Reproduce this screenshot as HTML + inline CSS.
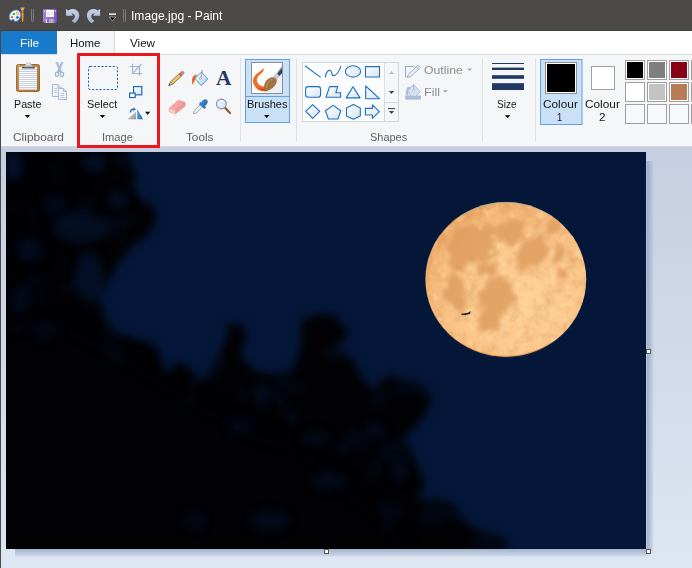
<!DOCTYPE html>
<html lang="en">
<head>
<meta charset="utf-8">
<title>Image.jpg - Paint</title>
<style>
html,body{margin:0;padding:0;}
body{width:692px;height:568px;overflow:hidden;position:relative;background:#d3dbe8;font-family:"Liberation Sans",sans-serif;font-size:12px;color:#1e1e1e;}
.abs{position:absolute;}
#titlebar{left:0;top:0;width:692px;height:30px;background:#4b4a48;border-bottom:1px solid #403f3d;}
#title{left:132px;top:9px;color:#fff;font-size:12px;line-height:14px;white-space:nowrap;}
#leftborder{left:0;top:0;width:1px;height:568px;background:#4b4a48;}
#tabrow{left:1px;top:31px;width:691px;height:23px;background:#fff;border-bottom:1px solid #dadbdc;}
#filetab{left:1px;top:31px;width:56px;height:23px;background:#1979ca;color:#fff;}
#hometab{left:58px;top:31px;width:56px;height:24px;background:#f5f6f7;border-right:1px solid #dadbdc;}
.tabtxt{position:absolute;top:5px;line-height:14px;white-space:nowrap;}
#ribbon{left:1px;top:55px;width:691px;height:91px;background:#f5f6f7;}
#workspace{left:1px;top:146px;width:691px;height:422px;background:linear-gradient(#d6d8dc 0,#d6d8dc 1px,#c5cfe1 1px,#dde6f2 100%);}
.lbl,.grp{transform-origin:0 0;font-size:11px;}
.lbl{position:absolute;white-space:nowrap;line-height:14px;color:#151515;}
.grp{position:absolute;white-space:nowrap;line-height:14px;color:#5f5f5f;}
.sep{position:absolute;top:58px;width:1px;height:84px;background:#e1e2e4;}
#redbox{left:77px;top:53px;width:77px;height:89px;border:3px solid #ec161d;}
#canvas{left:6px;top:152px;width:640px;height:396.6px;background:#051738;overflow:hidden;}
.handle{position:absolute;width:3px;height:3px;background:#fff;border:1px solid #555;}
</style>
</head>
<body>
<div id="workspace" class="abs"></div>
<div id="titlebar" class="abs"></div>
<div id="tabrow" class="abs"></div>
<div id="filetab" class="abs"></div>
<div id="hometab" class="abs"></div>
<div id="ribbon" class="abs"></div>

<div class="sep" style="left:240px"></div>
<div class="sep" style="left:296px"></div>
<div class="sep" style="left:482px"></div>
<div class="sep" style="left:535px"></div>
<svg id="ui" width="692" height="150" viewBox="0 0 692 150" style="position:absolute;left:0;top:0;overflow:visible">
<defs>
<linearGradient id="gUndo" x1="0" y1="0" x2="0" y2="1"><stop offset="0" stop-color="#c3d1e6"/><stop offset="1" stop-color="#9fb3d2"/></linearGradient>
<linearGradient id="gPurple" x1="0" y1="0" x2="1" y2="0"><stop offset="0" stop-color="#a67ddc"/><stop offset="0.8" stop-color="#9364cf"/><stop offset="1" stop-color="#6d45b3"/></linearGradient>
<linearGradient id="gPal" x1="0" y1="0" x2="1" y2="1"><stop offset="0" stop-color="#ffffff"/><stop offset="1" stop-color="#d4e6f8"/></linearGradient>
</defs>
<!-- app icon: palette + brush -->
<g id="appicon">
<path d="M9.3,17.2 C9.0,12.8 13.2,9.8 16.6,10.0 C19.6,10.2 21.0,12.6 20.6,15.6 C20.2,18.8 18.2,21.4 15.6,21.6 C14.0,21.7 14.4,19.6 13.4,19.3 C12.4,19.0 12.2,20.6 10.9,20.3 C9.9,20.0 9.4,18.6 9.3,17.2 Z" fill="url(#gPal)" stroke="#3f8fdc" stroke-width="0.9"/>
<rect x="12.6" y="13.1" width="2.4" height="1.8" rx="0.6" fill="#3fae2a"/>
<circle cx="17.4" cy="13.3" r="1.1" fill="#fff" stroke="#f7941d" stroke-width="1"/>
<rect x="11.1" y="16.1" width="1.8" height="1.9" fill="#e8501e"/>
<circle cx="17.4" cy="17.4" r="1.0" fill="#4b4a48" stroke="#2f7fd0" stroke-width="0.9"/>
<path d="M20.2,7.6 L24.8,7.6 L23.4,10.4 L21.6,10.4 Z" fill="#e8a864"/>
<path d="M21.6,10.2 L23.4,10.2 L23.2,12.6 L21.8,12.6 Z" fill="#9a9a9a"/>
<path d="M21.5,12.6 L23.7,12.6 L23.4,21.0 L22.6,22.2 L21.8,21.0 Z" fill="#f7870f"/>
<path d="M22.3,13 L22.9,13 L22.8,20 L22.4,20 Z" fill="#ffc46a" opacity="0.8"/>
</g>
<!-- separators -->
<path d="M31.5,9 V20.5 Q31.5,21.5 32.5,21.5 Q33.5,21.5 33.5,20.5 V9" fill="none" stroke="#848280" stroke-width="0.9"/>
<path d="M123.5,9 V20.5 Q123.5,21.5 124.5,21.5 Q125.5,21.5 125.5,20.5 V9" fill="none" stroke="#848280" stroke-width="0.9"/>
<!-- save -->
<g id="save">
<path d="M43,10 Q43,9 44,9 H56 Q57,9 57,10 V22 Q57,23 56,23 H44.5 L43,21.5 Z" fill="url(#gPurple)"/>
<rect x="46" y="10" width="8" height="7" fill="#ffffff"/>
<rect x="46" y="12" width="8" height="0.8" fill="#d9d9e2"/>
<rect x="46" y="14.2" width="8" height="0.8" fill="#d9d9e2"/>
<rect x="44" y="10.6" width="1" height="1.4" fill="#e6d8f8"/>
<rect x="55" y="10.6" width="1" height="1.4" fill="#e6d8f8"/>
<rect x="46" y="19" width="7.6" height="4" fill="#b4b4b4"/>
<rect x="47" y="19" width="2" height="3.2" fill="#8a5fc8"/>
<rect x="46" y="19" width="1" height="4" fill="#e8e8e8"/>
</g>
<!-- undo -->
<path id="undoP" d="M66,9 L66,15.7 L73.2,15.7 L71.4,13.5 C73,13 74.6,14.2 74.8,16 C75,18 73.6,19.6 71.7,20.8 L74.4,23.2 C77.4,21.4 79.2,18.6 79.2,15.2 C79.2,11.6 76,8.8 72,9 C70.6,9.1 69.4,9.6 68.4,10.5 Z" fill="url(#gUndo)"/>
<path d="M66,9 L66,15.7 L73.2,15.7 L71.4,13.5 C73,13 74.6,14.2 74.8,16 C75,18 73.6,19.6 71.7,20.8 L74.4,23.2 C77.4,21.4 79.2,18.6 79.2,15.2 C79.2,11.6 76,8.8 72,9 C70.6,9.1 69.4,9.6 68.4,10.5 Z" fill="url(#gUndo)" transform="translate(166.1,0) scale(-1,1)"/>
<!-- qat dropdown -->
<rect x="109" y="13.4" width="7" height="1.5" fill="#f2f2f2"/>
<path d="M109.2,17 H115.8 L112.5,21 Z" fill="#0a0a0a" stroke="#cfcfcf" stroke-width="0.6"/>

<!-- ===== ribbon icons ===== -->
<defs>
<linearGradient id="gBoard" x1="0" y1="0" x2="1" y2="1"><stop offset="0" stop-color="#c99a5b"/><stop offset="1" stop-color="#a97334"/></linearGradient>
<linearGradient id="gClip" x1="0" y1="0" x2="0" y2="1"><stop offset="0" stop-color="#f4f4f4"/><stop offset="1" stop-color="#9a9a9a"/></linearGradient>
<linearGradient id="gShape" x1="0" y1="0" x2="1" y2="1"><stop offset="0" stop-color="#ffffff"/><stop offset="1" stop-color="#d6e5f5"/></linearGradient>
<linearGradient id="gGrayTri" x1="0" y1="0" x2="1" y2="1"><stop offset="0" stop-color="#f2f2f2"/><stop offset="1" stop-color="#8c8c8c"/></linearGradient>
<linearGradient id="gBlueTri" x1="0" y1="0" x2="1" y2="0"><stop offset="0" stop-color="#5aa0e0"/><stop offset="1" stop-color="#1560ad"/></linearGradient>
<pattern id="paperlines" x="19" y="69" width="18" height="2" patternUnits="userSpaceOnUse"><rect x="0" y="0" width="18" height="1" fill="#c3cee3"/></pattern>
</defs>
<!-- paste -->
<g id="paste">
<rect x="16.5" y="64.5" width="23" height="27" rx="1.8" fill="url(#gBoard)" stroke="#9a6a2e" stroke-width="1"/>
<rect x="19" y="67" width="18" height="22.5" fill="#ffffff"/>
<rect x="19" y="69" width="18" height="19" fill="url(#paperlines)"/>
<rect x="19" y="88.6" width="18" height="0.9" fill="#d9dbe0"/>
<path d="M22,68 L25.4,64.6 Q28.4,61 31.4,64.6 L34.8,68 Z" fill="url(#gClip)" stroke="#8a8a8a" stroke-width="0.6"/>
<circle cx="28.4" cy="64.2" r="0.9" fill="#f5f6f7"/>
<rect x="21.8" y="67.2" width="13.2" height="1.1" fill="#4d4d4d"/>
</g>
<path d="M24.8,115 H30.2 L27.5,118 Z" fill="#000"/>
<!-- cut -->
<g id="cut" fill="none" stroke="#9db1cf" stroke-linecap="round">
<path d="M56.2,62.4 L57.6,62.4 L61.6,71.6 L60.4,72.4 Z" fill="#a9bbd6" stroke-width="0.6"/>
<path d="M62.8,62.4 L61.4,62.4 L57.4,71.6 L58.6,72.4 Z" fill="#a9bbd6" stroke-width="0.6"/>
<ellipse cx="57" cy="74.3" rx="1.6" ry="2.2" stroke-width="1.2"/>
<ellipse cx="62" cy="74.3" rx="1.6" ry="2.2" stroke-width="1.2"/>
</g>
<!-- copy -->
<g id="copy" stroke="#a6b8d6" stroke-width="1" fill="#f3f6fb">
<path d="M52.5,84.5 H58 L61.5,88 V96.5 H52.5 Z"/>
<path d="M58,84.5 V88 H61.5" fill="none"/>
<path d="M58.5,88.5 H63.5 L66.5,91.5 V99.5 H58.5 Z" fill="#f8fafd"/>
<path d="M63.5,88.5 V91.5 H66.5" fill="none"/>
<path d="M54.5,88.5 H57 M54.5,90.5 H57 M54.5,92.5 H57 M60.5,93.5 H64.5 M60.5,95.5 H64.5 M60.5,97.5 H64.5" stroke="#b4c3dc" fill="none"/>
</g>
<!-- select -->
<rect x="88.5" y="66.5" width="29" height="23" rx="1.5" fill="none" stroke="#1763ad" stroke-width="1" stroke-dasharray="2.1 1.7"/>
<path d="M99.8,115 H105.2 L102.5,118 Z" fill="#000"/>
<!-- crop -->
<g id="crop" fill="none" stroke="#9db1cf" stroke-width="1.1">
<path d="M129.5,66.5 H139.5 V75.8"/>
<path d="M132.5,63.5 V73.5 H141.8"/>
<path d="M133.5,72.5 L141.5,64"/>
</g>
<!-- resize -->
<g id="resize">
<rect x="133.6" y="86.6" width="8.2" height="8.2" fill="url(#gShape)" stroke="#1a6ab8" stroke-width="1.2"/>
<rect x="129.6" y="93.1" width="5.6" height="4.4" fill="#ffffff" stroke="#1a6ab8" stroke-width="1.2"/>
</g>
<!-- rotate -->
<g id="rotate">
<path d="M127.4,119.3 L136,119.3 L136,111.6 Z" fill="url(#gGrayTri)"/>
<path d="M137.2,119.3 L143,119.3 L137.2,109 Z" fill="url(#gBlueTri)"/>
<path d="M130.4,112.6 C130.4,110.4 131.8,109.3 133.8,109.2" fill="none" stroke="#1a6ab8" stroke-width="1.3"/>
<path d="M133.4,107.6 L136,109.3 L133.4,111 Z" fill="#1a6ab8"/>
<path d="M145,111.8 H150.2 L147.6,114.8 Z" fill="#000"/>
</g>

<!-- ===== tools ===== -->
<defs>
<linearGradient id="gPencil" x1="0" y1="0" x2="1" y2="1"><stop offset="0" stop-color="#ffe08a"/><stop offset="1" stop-color="#e9a820"/></linearGradient>
<linearGradient id="gBucket" x1="0" y1="0" x2="1" y2="1"><stop offset="0" stop-color="#ffffff"/><stop offset="0.5" stop-color="#dcebf9"/><stop offset="1" stop-color="#8fbce8"/></linearGradient>
<linearGradient id="gEraser" x1="0" y1="0" x2="1" y2="1"><stop offset="0" stop-color="#f9b4b0"/><stop offset="1" stop-color="#ee8f8c"/></linearGradient>
<linearGradient id="gDrop" x1="0" y1="0" x2="1" y2="1"><stop offset="0" stop-color="#4d95d8"/><stop offset="1" stop-color="#1c5fa8"/></linearGradient>
<radialGradient id="gLens" cx="0.4" cy="0.35" r="0.7"><stop offset="0" stop-color="#ffffff"/><stop offset="1" stop-color="#c4dcf4"/></radialGradient>
</defs>
<!-- pencil -->
<g id="pencil">
<path d="M168.8,85.6 L170.6,81.7 L179,73.9 L181.2,76.3 L172.8,84.1 Z" fill="url(#gPencil)" stroke="#5f5138" stroke-width="0.7" stroke-linejoin="round"/>
<path d="M168.8,85.6 L170.6,81.7 L172.8,84.1 Z" fill="#ecd0a8" stroke="#5f5138" stroke-width="0.5"/>
<path d="M168.8,85.6 L169.5,84 L170.5,85 Z" fill="#2a2a2a"/>
<path d="M179,73.9 L180.1,72.8 L182.3,75.2 L181.2,76.3 Z" fill="#8e8e8e" stroke="#5f5138" stroke-width="0.4"/>
<path d="M180.1,72.8 L181.4,71.6 Q182.9,70.6 183.9,71.9 Q184.8,73 183.6,74.1 L182.3,75.2 Z" fill="#e07a7e" stroke="#a85a5c" stroke-width="0.4"/>
</g>
<!-- fill bucket -->
<g id="bucket">
<path d="M196.4,74.6 C193.6,75 192,77.6 192,80.2 C192,82.4 192.4,84 193,85 C193.6,82.2 194.6,79.8 197,77.4 Z" fill="#f0601a"/>
<path d="M201.4,72.2 L207.9,78.9 L201.3,85.7 L194.9,78.2 Z" fill="url(#gBucket)" stroke="#5b9bd5" stroke-width="1" stroke-linejoin="round"/>
<path d="M202,70 C202.8,72 201.4,75 200.6,78" fill="none" stroke="#8a8f98" stroke-width="0.9"/>
<circle cx="200.5" cy="78.4" r="1.1" fill="#fff" stroke="#8a8f98" stroke-width="0.7"/>
</g>
<!-- text A -->
<text x="216" y="84.9" font-family="'Liberation Serif',serif" font-weight="bold" font-size="20" fill="#1f3864" textLength="15.4" lengthAdjust="spacingAndGlyphs">A</text>
<!-- eraser -->
<g id="eraser">
<path d="M169.2,108.4 L178.4,100.2 L185.2,102.6 L185,106.2 L175.4,113.8 L169.2,111.6 Z" fill="url(#gEraser)" stroke="#e07f7c" stroke-width="0.6" stroke-linejoin="round"/>
<path d="M169.2,108.4 L175.6,110.6 L185.2,102.6 M175.6,110.6 L175.4,113.8" fill="none" stroke="#e88d8a" stroke-width="0.7"/>
<path d="M169.2,108.4 L175.6,110.6 L175.4,113.8 L169.2,111.6 Z" fill="#fbc9bd"/>
</g>
<!-- colour picker -->
<g id="picker">
<path d="M193.4,113.6 L194.2,111 L201,103.6 L203.4,105.8 L196.4,113 Z" fill="#f2f5fa" stroke="#8c94a4" stroke-width="0.8"/>
<path d="M199,104.4 L204.6,109 L206,107.4 L204.8,106.2 C207.4,104.4 208.6,101.6 207.2,100 C205.6,98.4 202.6,99.4 201.2,102.4 L200.2,101.6 Z" fill="url(#gDrop)"/>
</g>
<!-- magnifier -->
<g id="magnifier">
<path d="M225,107.8 L230,113" stroke="#8a5a2e" stroke-width="2.2" stroke-linecap="round"/>
<circle cx="221.4" cy="104" r="4.9" fill="url(#gLens)" stroke="#8c9099" stroke-width="1.1"/>
<path d="M219,103 H223.4" stroke="#b5d2ee" stroke-width="0.8"/>
</g>
<!-- brushes button -->
<g id="brushes">
<rect x="245.5" y="59.5" width="44" height="63" fill="#c9e0f7" stroke="#62a2e4" stroke-width="1"/>
<path d="M245.5,96.5 H289.5" stroke="#62a2e4" stroke-width="1"/>
<rect x="251.5" y="62.5" width="31" height="31" fill="#ffffff" stroke="#8e8e8e" stroke-width="1"/>
<clipPath id="brclip"><rect x="252" y="63" width="30" height="30"/></clipPath>
<g clip-path="url(#brclip)">
<path d="M282,70 L282,93 L262,93 Z" fill="#e9edf2" opacity="0.8"/>
<path d="M263.4,68 C262.4,70.4 259.6,71.4 257,73.6 C253.4,76.6 251.6,80.6 254.2,85.2 C256.6,89.6 262.4,91.8 267.4,90.6 L270.6,84.6 C266,87.6 259.6,87 257.4,82.4 C255.8,78.8 257.8,76 260.4,74.2 C262.6,72.6 264.4,70.8 263.4,68 Z" fill="#f26a21"/>
<path d="M256.6,88 C260,91.6 264.8,92 268,90.4 L269.6,86.2 C266,88.4 260.4,88.8 256.6,88 Z" fill="#d9531a"/>
<path d="M272.4,78.4 L283,65 L283,72 L275,80.8 Z" fill="#c9ccd2" stroke="#8f949c" stroke-width="0.5"/>
<path d="M277.4,73.6 L283,66.6 L283,72 L279.2,76 Z" fill="#2c3f6a"/>
<path d="M264.4,88.6 C263.2,84.4 266.2,79.2 270.8,77.6 C273.6,76.6 276.6,78.4 276.8,80.8 C277,84.2 272.6,89.6 267.4,90.6 C265.8,90.8 264.8,90 264.4,88.6 Z" fill="#a3733f"/>
<path d="M266.6,87.4 C266.4,84.2 268.6,80.6 271.8,79.4" fill="none" stroke="#c49a66" stroke-width="1"/>
</g>
<path d="M264.1,115 H269.3 L266.7,118 Z" fill="#000"/>
</g>

<!-- ===== shapes gallery ===== -->
<g id="shapes">
<rect x="302.5" y="62.5" width="96" height="59" fill="#fbfcfd" stroke="#d3d6db" stroke-width="1"/>
<rect x="385" y="63" width="13" height="58" fill="#f5f6f7"/>
<path d="M384.5,62.5 V121.5" stroke="#dcdfe3" stroke-width="1"/>
<rect x="384.5" y="102.5" width="14" height="19" fill="#f5f6f7" stroke="#d3d6db" stroke-width="1"/>
<g fill="url(#gShape)" stroke="#1f6fc0" stroke-width="1.1" stroke-linejoin="round">
<path d="M305,65.7 L320.7,77.4" fill="none"/>
<path d="M325.3,77.4 C326,72 328.4,69.6 330.4,70.6 C332.6,71.8 331,75.8 333.6,75.6 C336.6,75.4 339.6,70 341,66.1" fill="none"/>
<ellipse cx="353" cy="71.4" rx="7.6" ry="5.7"/>
<rect x="365.5" y="66.6" width="14" height="10.4"/>
<rect x="305.6" y="86.6" width="15" height="10.6" rx="2.6"/>
<path d="M329.6,86.6 H337.8 L335.8,92.7 H340.6 V97.3 H326 Z"/>
<path d="M353,86.8 L360,97.9 H346.2 Z"/>
<path d="M365.7,86 V98.7 H379.4 Z"/>
<path d="M312.7,104.6 L319.7,111.4 L312.7,118.3 L305.7,111.4 Z"/>
<path d="M333.1,105.4 L340.8,110.8 L337.9,119 H328.4 L325.5,110.8 Z"/>
<path d="M353.4,104.6 L360.3,107.9 V116 L353.4,119.3 L346.5,116 V107.9 Z"/>
<path d="M365.4,108.4 H372.4 V104.9 L379.4,111.6 L372.4,118.4 V115 H365.4 Z"/>
</g>
<path d="M389,74 L391.5,71 L394,74 Z" fill="#b9bdc9"/>
<path d="M388.8,91 H394.2 L391.5,94 Z" fill="#3f4560"/>
<path d="M388,108.6 H395" stroke="#3f4560" stroke-width="1.1"/>
<path d="M388.8,111 H394.2 L391.5,114 Z" fill="#3f4560"/>
</g>
<!-- outline / fill -->
<g id="outlinefill">
<path d="M405.5,77.5 V66.5 H414.5" fill="none" stroke="#9cb0cf" stroke-width="1.1"/>
<path d="M407.3,77.6 L408.5,74.2 L417.9,65.2 L420.3,67.6 L410.8,76.5 Z" fill="#e9eef6" stroke="#9cb0cf" stroke-width="1" stroke-linejoin="round"/>
<path d="M416.3,66.8 L418.7,69.2" stroke="#9cb0cf" stroke-width="0.9"/>
<path d="M467.2,68.4 H472 L469.6,71 Z" fill="#a6a6a6"/>
<rect x="405.2" y="95.5" width="15.8" height="4.1" fill="#a9bbd6"/>
<path d="M408.8,86.4 C406.4,87.4 405.6,90.4 406.2,95 L408.4,95.2 C408.2,91.6 408.6,89.4 410.2,87.8 Z" fill="#a9bbd6"/>
<path d="M413.5,84.8 L420.3,91.6 L415.6,96.4 H411.6 L407.4,90.8 Z" fill="#d5e0ef" stroke="#a9bbd6" stroke-width="1" stroke-linejoin="round"/>
<path d="M413.7,84 V90.6" stroke="#a0b2cf" stroke-width="0.9"/>
<circle cx="413.5" cy="90.9" r="1" fill="#fff" stroke="#a0b2cf" stroke-width="0.6"/>
<path d="M443,90.2 H447.8 L445.4,92.8 Z" fill="#a6a6a6"/>
</g>
<!-- size -->
<g id="size" fill="#1f3864">
<rect x="492" y="63" width="32" height="1"/>
<rect x="492" y="67.6" width="32" height="2.4"/>
<rect x="492" y="75.2" width="32" height="3.6"/>
<rect x="492" y="83.2" width="32" height="6.8"/>
<path d="M505,115.3 H510.2 L507.6,118.2 Z" fill="#000"/>
</g>
<!-- colours -->
<g id="colours">
<rect x="540.5" y="59.5" width="41.5" height="65" fill="#c9e0f7" stroke="#62a2e4" stroke-width="1"/>
<rect x="545.5" y="62.5" width="31" height="31" fill="#ffffff" stroke="#8e8e8e" stroke-width="1"/>
<rect x="547" y="64" width="28" height="28" fill="#000000"/>
<rect x="591.5" y="66.5" width="23" height="23" fill="#ffffff" stroke="#a0a0a0" stroke-width="1"/>
<g stroke="#a0a0a0" stroke-width="1" fill="#ffffff">
<rect x="625.5" y="60.5" width="19" height="19"/><rect x="647.5" y="60.5" width="19" height="19"/><rect x="669.5" y="60.5" width="19" height="19"/><rect x="691.5" y="60.5" width="19" height="19"/>
<rect x="625.5" y="82.5" width="19" height="19"/><rect x="647.5" y="82.5" width="19" height="19"/><rect x="669.5" y="82.5" width="19" height="19"/><rect x="691.5" y="82.5" width="19" height="19"/>
<rect x="625.5" y="104.5" width="19" height="19" fill="#f7f8f9"/><rect x="647.5" y="104.5" width="19" height="19" fill="#f7f8f9"/><rect x="669.5" y="104.5" width="19" height="19" fill="#f7f8f9"/><rect x="691.5" y="104.5" width="19" height="19" fill="#f7f8f9"/>
</g>
<rect x="627" y="62" width="16" height="16" fill="#000000"/>
<rect x="649" y="62" width="16" height="16" fill="#7f7f7f"/>
<rect x="671" y="62" width="16" height="16" fill="#880015"/>
<rect x="627" y="84" width="16" height="16" fill="#ffffff"/>
<rect x="649" y="84" width="16" height="16" fill="#c3c3c3"/>
<rect x="671" y="84" width="16" height="16" fill="#b97a57"/>
</g>
</svg>
<!-- ribbon labels -->
<span class="lbl" style="left:13.84px;top:97px;transform:scaleX(0.9724)">Paste</span>
<span class="grp" style="left:13.24px;top:130px;transform:scaleX(1.0829)">Clipboard</span>
<span class="lbl" style="left:86.75px;top:97px;transform:scaleX(0.9867)">Select</span>
<span class="grp" style="left:101.91px;top:130px;transform:scaleX(1.0096)">Image</span>
<span class="grp" style="left:185.54px;top:130px;transform:scaleX(1.0653)">Tools</span>
<span class="lbl" style="left:246.62px;top:97px;transform:scaleX(1.0043)">Brushes</span>
<span class="grp" style="left:369.84px;top:130px;transform:scaleX(0.9957)">Shapes</span>
<span class="lbl" style="left:424.09px;top:63px;transform:scaleX(1.1116);color:#8d8d8d">Outline</span>
<span class="lbl" style="left:423.71px;top:85px;transform:scaleX(1.1395);color:#8d8d8d">Fill</span>
<span class="lbl" style="left:497.40px;top:97px;transform:scaleX(0.9095)">Size</span>
<span class="lbl" style="left:543.04px;top:97px;transform:scaleX(1.0755)">Colour</span>
<span class="lbl" style="left:557.21px;top:110px;transform:scaleX(0.8523)">1</span>
<span class="lbl" style="left:585.14px;top:97px;transform:scaleX(1.0755)">Colour</span>
<span class="lbl" style="left:599.00px;top:110px;transform:scaleX(1.0512)">2</span>
<span class="lbl" style="left:130.03px;top:36px;transform:scaleX(1.0579)">View</span>
<span class="lbl" style="left:70.49px;top:36px;transform:scaleX(1.0383)">Home</span>
<span class="lbl" style="left:19.56px;top:36px;transform:scaleX(1.0778);color:#fff">File</span>
<span class="lbl" style="left:131.18px;top:9px;transform:scaleX(1.0080);font-size:12px;color:#fff">Image.jpg - Paint</span>
<!-- end labels -->
<div id="redbox" class="abs"></div>
<div id="canvas" class="abs">
<svg id="photo" width="640" height="396.6" viewBox="6 152 640 396" preserveAspectRatio="none" style="position:absolute;left:0;top:0">
<defs>
<filter id="b5" x="-5%" y="-5%" width="110%" height="110%" color-interpolation-filters="sRGB">
<feTurbulence type="fractalNoise" baseFrequency="0.035" numOctaves="2" seed="7" result="n"/>
<feDisplacementMap in="SourceGraphic" in2="n" scale="16" xChannelSelector="R" yChannelSelector="G" result="d"/>
<feGaussianBlur in="d" stdDeviation="4.2" result="bl"/>
<feTurbulence type="fractalNoise" baseFrequency="0.03" numOctaves="2" seed="23" result="n2"/>
<feColorMatrix in="n2" type="matrix" values="0 0 0 0 0  0 0 0 0 0  0 0 0 0 0  0 0 0 -10 4.1" result="holes"/>
<feGaussianBlur in="holes" stdDeviation="3" result="hb"/>
<feComposite in="bl" in2="hb" operator="arithmetic" k1="-0.22" k2="1" k3="0" k4="0"/>
</filter>
<filter id="b12" x="-10%" y="-10%" width="120%" height="120%" color-interpolation-filters="sRGB"><feGaussianBlur stdDeviation="11"/></filter>
<filter id="b4" x="-10%" y="-10%" width="120%" height="120%" color-interpolation-filters="sRGB"><feGaussianBlur stdDeviation="5"/></filter>
<filter id="b3" x="-10%" y="-10%" width="120%" height="120%" color-interpolation-filters="sRGB">
<feTurbulence type="fractalNoise" baseFrequency="0.06" numOctaves="3" seed="4" result="n"/>
<feDisplacementMap in="SourceGraphic" in2="n" scale="16" xChannelSelector="R" yChannelSelector="G" result="d"/>
<feGaussianBlur in="d" stdDeviation="2.2"/>
</filter>
<filter id="mtex" x="0" y="0" width="100%" height="100%" color-interpolation-filters="sRGB">
<feTurbulence type="fractalNoise" baseFrequency="0.09" numOctaves="3" seed="11" result="n"/>
<feColorMatrix in="n" type="matrix" values="0 0 0 0 0.78  0 0 0 0 0.50  0 0 0 0 0.26  0 0 0 2.2 -0.95"/>
</filter>
<filter id="mtex2" x="0" y="0" width="100%" height="100%" color-interpolation-filters="sRGB">
<feTurbulence type="fractalNoise" baseFrequency="0.12" numOctaves="2" seed="31" result="n"/>
<feColorMatrix in="n" type="matrix" values="0 0 0 0 1  0 0 0 0 0.88  0 0 0 0 0.68  0 0 0 2.4 -1.25"/>
</filter>
<filter id="b2" x="-30%" y="-30%" width="160%" height="160%" color-interpolation-filters="sRGB"><feGaussianBlur stdDeviation="1.6"/></filter>
<radialGradient id="moong" cx="0.6" cy="0.64" r="0.66">
<stop offset="0" stop-color="#ffd196"/><stop offset="0.6" stop-color="#fbc78b"/><stop offset="0.9" stop-color="#f4b777"/><stop offset="1" stop-color="#eba868"/>
</radialGradient>
<clipPath id="moonclip"><ellipse cx="505.8" cy="279.2" rx="80.4" ry="77.2"/></clipPath>
</defs>
<rect x="6" y="152" width="640" height="396" fill="#051738"/>
<!-- trees -->
<g filter="url(#b5)" fill="#020205">
<path d="M-10,140 L128,140 L131,158 L135,172 L129,186 L140,199 L156,208 L160,220 L150,232 L131,241 L127,256 L116,268 L106,284 L99,300 L112,327 L139,339 L161,354 L166,372 L180,366 L199,380 L210,372 L216,358 L224,344 L228,336 L230,324 L240,320 L248,327 L249,338 L243,346 L241,356 L250,366 L262,374 L278,378 L290,368 L298,352 L303,338 L299,326 L305,317 L320,314 L337,317 L346,328 L344,340 L337,346 L346,352 L352,364 L362,378 L373,387 L384,380 L396,376 L410,378 L424,387 L433,405 L420,420 L406,433 L410,448 L414,458 L420,472 L424,484 L419,506 L436,500 L451,502 L462,514 L474,524 L488,530 L501,534 L514,560 L-10,560 Z"/>
</g>
<g filter="url(#b12)" fill="#020205">
<path d="M-20,335 L60,330 L120,362 L190,405 L250,440 L300,452 L350,500 L390,535 L400,570 L-20,570 Z"/>
<path d="M-20,140 L60,140 L70,180 L40,200 L30,260 L-20,300 Z" opacity="0.7"/>
</g>
<!-- gaps -->
<g filter="url(#b4)" fill="#051738">
<ellipse cx="13" cy="166" rx="9" ry="14" opacity="0.8"/>
<ellipse cx="94" cy="163" rx="12" ry="8" opacity="0.7"/>
<ellipse cx="82" cy="228" rx="30" ry="14" opacity="0.55"/>
<ellipse cx="55" cy="205" rx="12" ry="10" opacity="0.4"/>
<ellipse cx="118" cy="200" rx="10" ry="9" opacity="0.5"/>
<ellipse cx="90" cy="278" rx="14" ry="24" opacity="0.6"/>
<ellipse cx="30" cy="250" rx="14" ry="12" opacity="0.45"/>
<ellipse cx="20" cy="300" rx="10" ry="14" opacity="0.4"/>
<ellipse cx="45" cy="330" rx="12" ry="10" opacity="0.3"/>
<ellipse cx="262" cy="395" rx="7" ry="12" opacity="0.5"/>
<ellipse cx="240" cy="425" rx="12" ry="9" opacity="0.35"/>
<ellipse cx="315" cy="438" rx="14" ry="8" opacity="0.4"/>
<ellipse cx="330" cy="480" rx="18" ry="9" opacity="0.4"/>
<ellipse cx="375" cy="430" rx="10" ry="8" opacity="0.4"/>
<ellipse cx="270" cy="520" rx="20" ry="10" opacity="0.4"/>
<ellipse cx="195" cy="520" rx="10" ry="9" opacity="0.3"/>
<ellipse cx="400" cy="470" rx="8" ry="12" opacity="0.4"/>
</g>
<!-- moon -->
<ellipse cx="505.8" cy="279.2" rx="80.4" ry="77.2" fill="url(#moong)"/>
<g clip-path="url(#moonclip)">
<rect x="425" y="202" width="162" height="156" filter="url(#mtex)" opacity="0.3"/>
<rect x="425" y="202" width="162" height="156" filter="url(#mtex2)" opacity="0.6"/>
<g filter="url(#b3)" fill="#de9e60" opacity="0.85">
<ellipse cx="470" cy="246" rx="22" ry="18"/>
<ellipse cx="458" cy="262" rx="8" ry="10"/>
<ellipse cx="490" cy="232" rx="8" ry="6"/>
<ellipse cx="509" cy="231" rx="15" ry="12"/>
<ellipse cx="535" cy="250" rx="14" ry="16"/>
<ellipse cx="523" cy="260" rx="7" ry="8"/>
<ellipse cx="553" cy="227" rx="8" ry="7.5"/>
<ellipse cx="559" cy="255" rx="7" ry="10"/>
<ellipse cx="562" cy="274" rx="5" ry="5"/>
<ellipse cx="498" cy="298" rx="17" ry="20"/>
<ellipse cx="487" cy="322" rx="11" ry="10"/>
<ellipse cx="456" cy="293" rx="11" ry="18"/>
<ellipse cx="487" cy="270" rx="9" ry="9"/>
</g>
<g filter="url(#b2)" fill="#ffd9a3" opacity="0.7">
<circle cx="522" cy="330" r="3"/>
<circle cx="491" cy="252" r="2.5"/>
<circle cx="517" cy="283" r="3"/>
<circle cx="443" cy="275" r="2"/>
<circle cx="540" cy="215" r="3"/>
</g>
</g>
<path d="M459.9,216.3 A80,76.8 0 0 1 551.7,216.3" fill="none" stroke="#a8ecd6" stroke-width="0.9" opacity="0.5"/>
<path d="M459.9,342.1 A80,76.8 0 0 0 551.7,342.1" fill="none" stroke="#f4701e" stroke-width="0.9" opacity="0.5"/>
<!-- plane -->
<path d="M461,313.5 L468,312.6 L470.5,310.8 L470.2,313.6 L465,314.8 L461.5,314.6 Z" fill="#141016"/>
</svg>
</div>
<div class="abs" style="left:646px;top:161px;width:8px;height:388px;background:linear-gradient(to right,rgba(150,166,195,0.3) 0,rgba(130,148,182,0.58) 1.5px,rgba(140,158,192,0.28) 6px,rgba(150,168,198,0.0) 8px)"></div>
<div class="abs" style="left:15px;top:549px;width:631px;height:8px;background:linear-gradient(to bottom,rgba(130,148,182,0.62) 0,rgba(140,158,192,0.3) 6px,rgba(150,168,198,0.0) 8px)"></div>
<div class="abs" style="left:646px;top:549px;width:8px;height:8px;background:radial-gradient(circle at 0 0,rgba(140,158,190,0.6) 0,rgba(150,168,198,0.0) 8px)"></div>
<div class="handle" style="left:324px;top:549px"></div>
<div class="handle" style="left:646px;top:349px"></div>
<div class="handle" style="left:646px;top:549px"></div>
<div id="leftborder" class="abs"></div>
</body>
</html>
